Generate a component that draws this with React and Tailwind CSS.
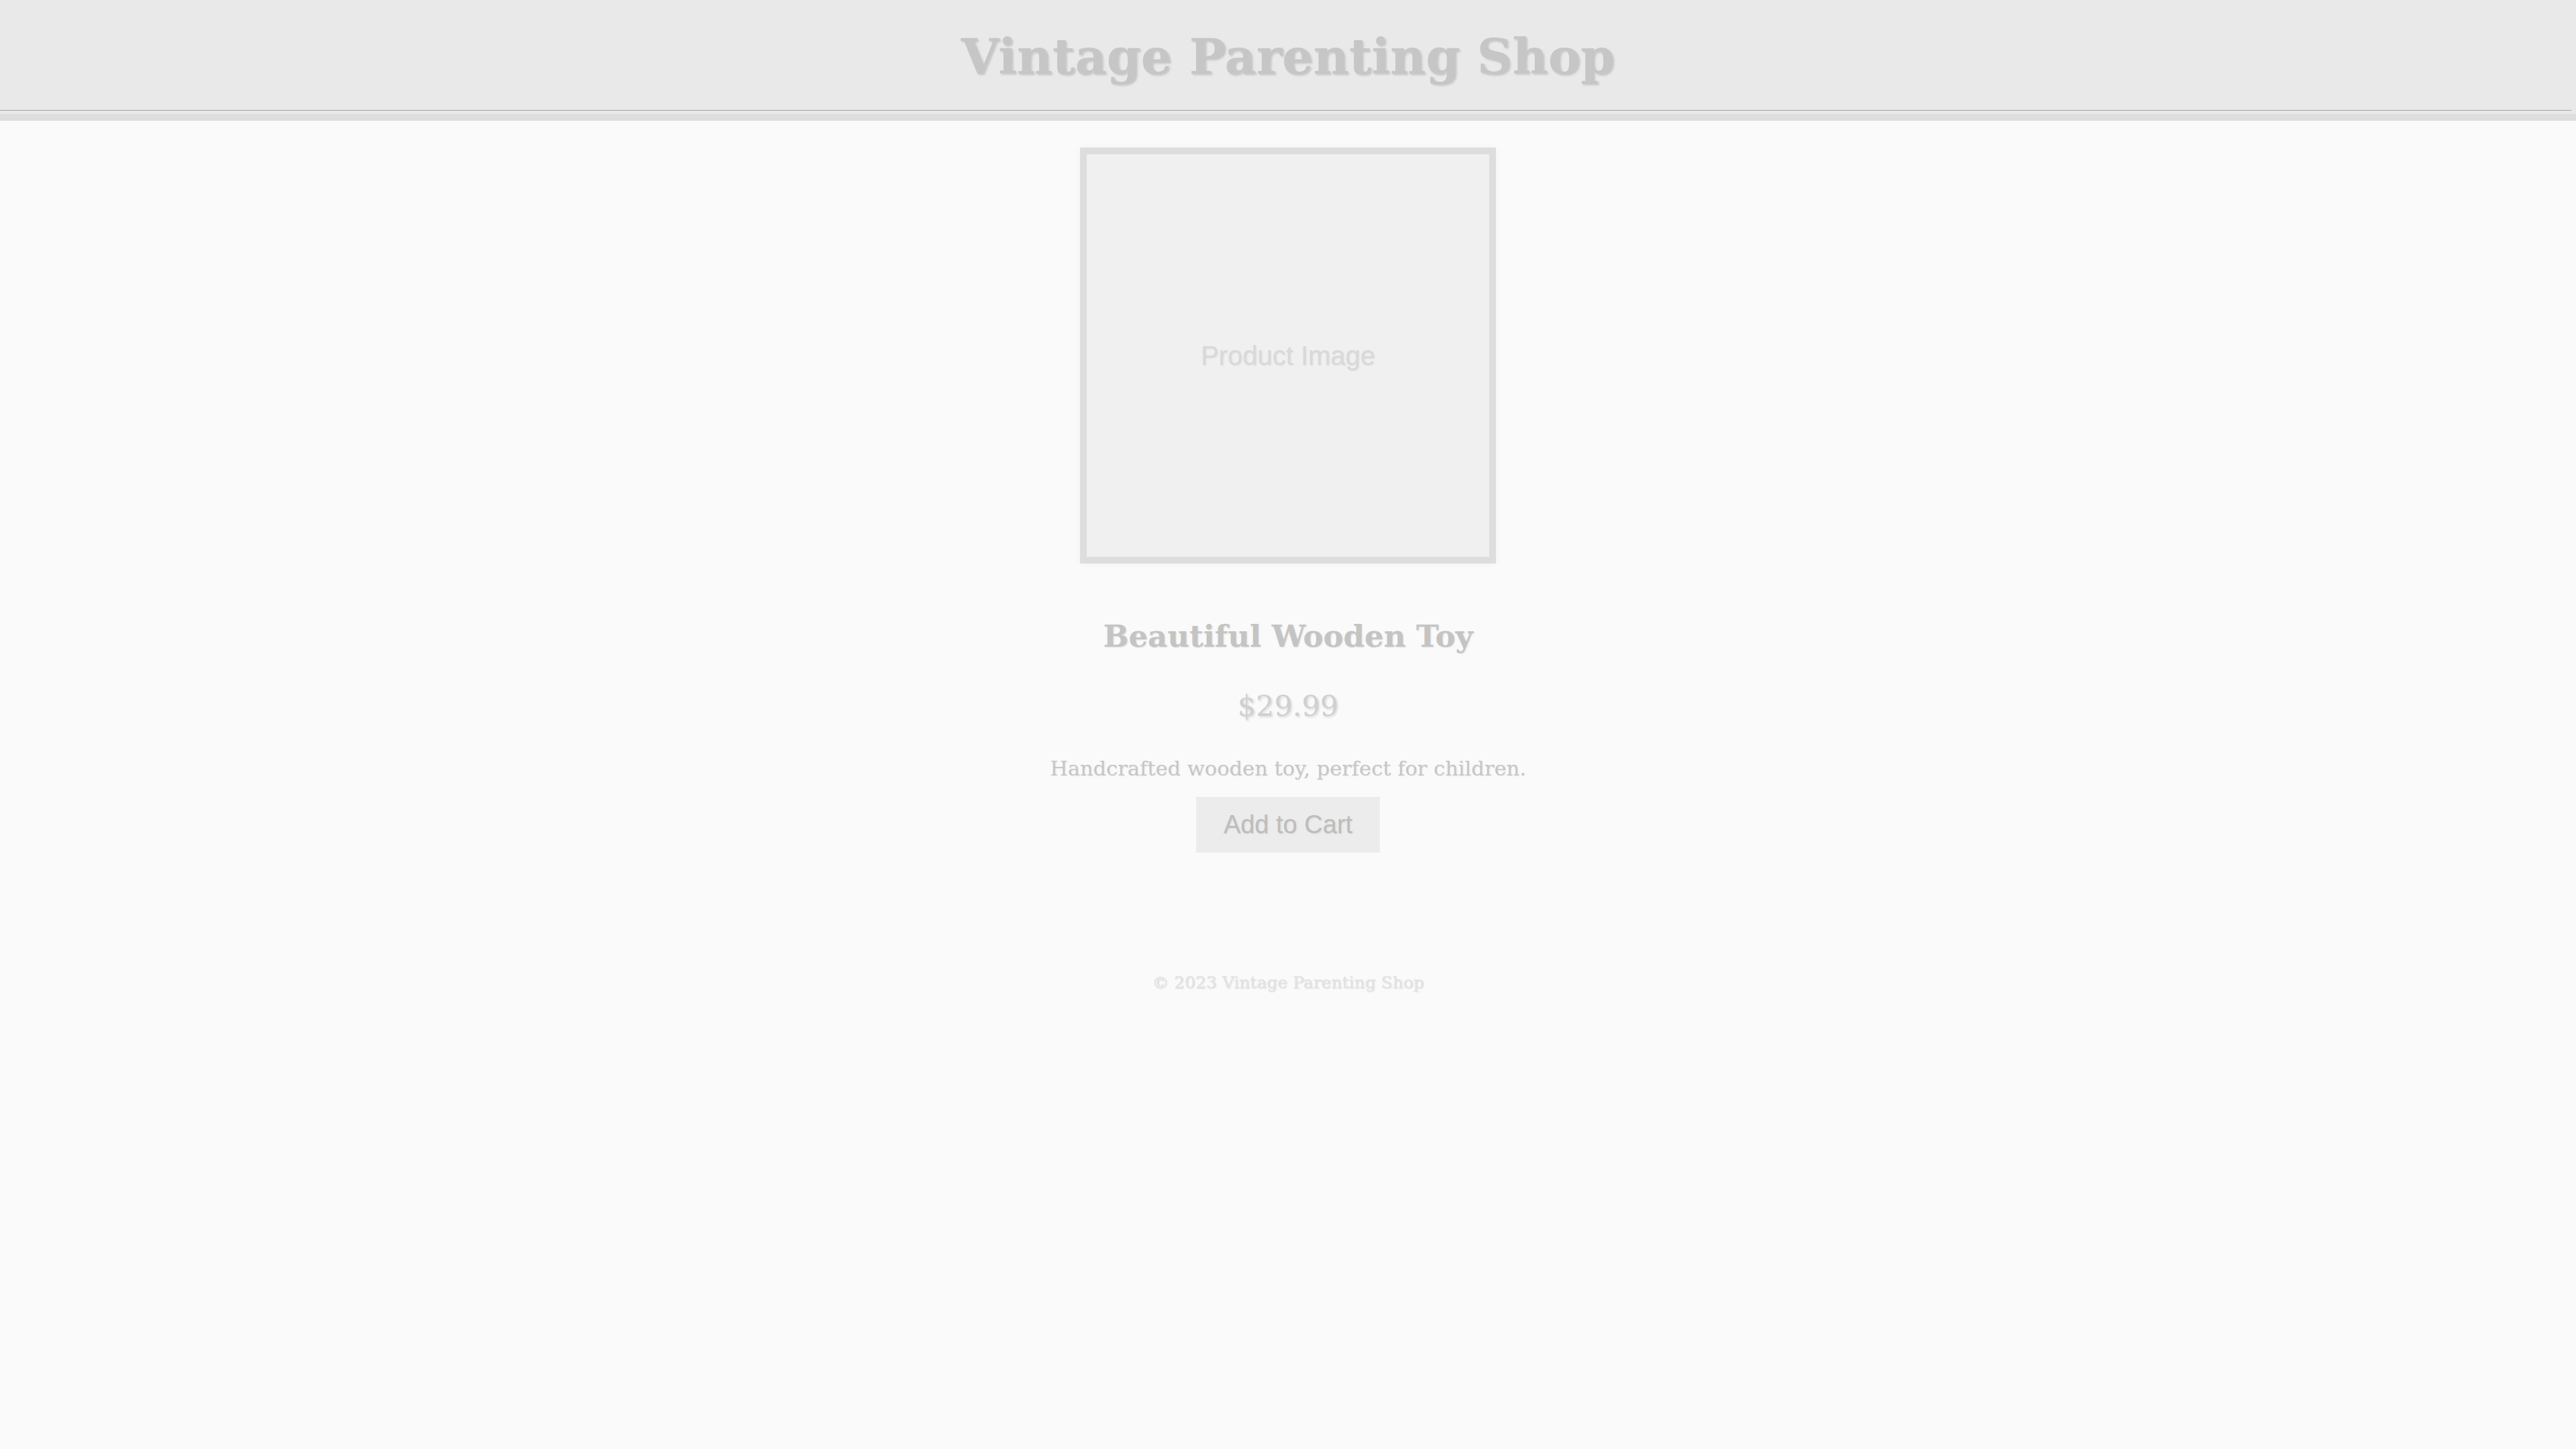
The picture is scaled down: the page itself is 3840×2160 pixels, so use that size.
export default function App() {
  const serif = "font-['DejaVu_Serif',serif]";
  return (
    <div className="min-h-[2160px] bg-[#fafafa] flex flex-col">
      <header className="bg-[#e9e9e9] border-b-[10px] border-[#dddddd] flex flex-col">
        <h1
          className={`${serif} font-bold text-[73px] leading-[100px] text-center text-[#c6c6c6] pt-[34px] pb-[30px] [text-shadow:2px_2px_3px_rgba(0,0,0,0.15)]`}
        >
          Vintage Parenting Shop
        </h1>
        <div className="h-px bg-[#a0a0a0] mr-[7px]" />
        <div className="h-[5px]" />
      </header>

      <main className="flex flex-col items-center pt-[40px]">
        <div className="w-[620px] h-[620px] border-[10px] border-[#dddddd] bg-[#f0f0f0] flex items-center justify-center shadow-[0_0_12px_rgba(0,0,0,0.04)]">
          <span className="font-['Liberation_Sans',sans-serif] text-[40px] text-[#d9d9d9] [text-shadow:1px_1px_2px_rgba(0,0,0,0.08)]">
            Product Image
          </span>
        </div>

        <h2
          className={`${serif} font-bold text-[45px] leading-[52px] text-[#c4c4c4] mt-[83px] [text-shadow:1px_1px_2px_rgba(0,0,0,0.12)]`}
        >
          Beautiful Wooden Toy
        </h2>

        <p
          className={`${serif} text-[43px] leading-[50px] text-[#d0d0d0] mt-[52px] [text-shadow:2px_2px_3px_rgba(0,0,0,0.12)]`}
        >
          $29.99
        </p>

        <p
          className={`${serif} text-[30.5px] leading-[40px] text-[#c6c6c6] mt-[49px] [text-shadow:1px_1px_2px_rgba(0,0,0,0.08)]`}
        >
          Handcrafted wooden toy, perfect for children.
        </p>

        <button className="mt-[22px] w-[274px] h-[83px] bg-[#ececec] font-['Liberation_Sans',sans-serif] text-[38px] text-[#bdbdbd] [text-shadow:1px_1px_2px_rgba(0,0,0,0.1)]">
          Add to Cart
        </button>
      </main>

      <footer className="flex justify-center mt-[176px]">
        <p
          className={`${serif} text-[25px] leading-[36px] text-[#e2e2e2] [text-shadow:1px_1px_2px_rgba(0,0,0,0.12)]`}
        >
          © 2023 Vintage Parenting Shop
        </p>
      </footer>
    </div>
  );
}
